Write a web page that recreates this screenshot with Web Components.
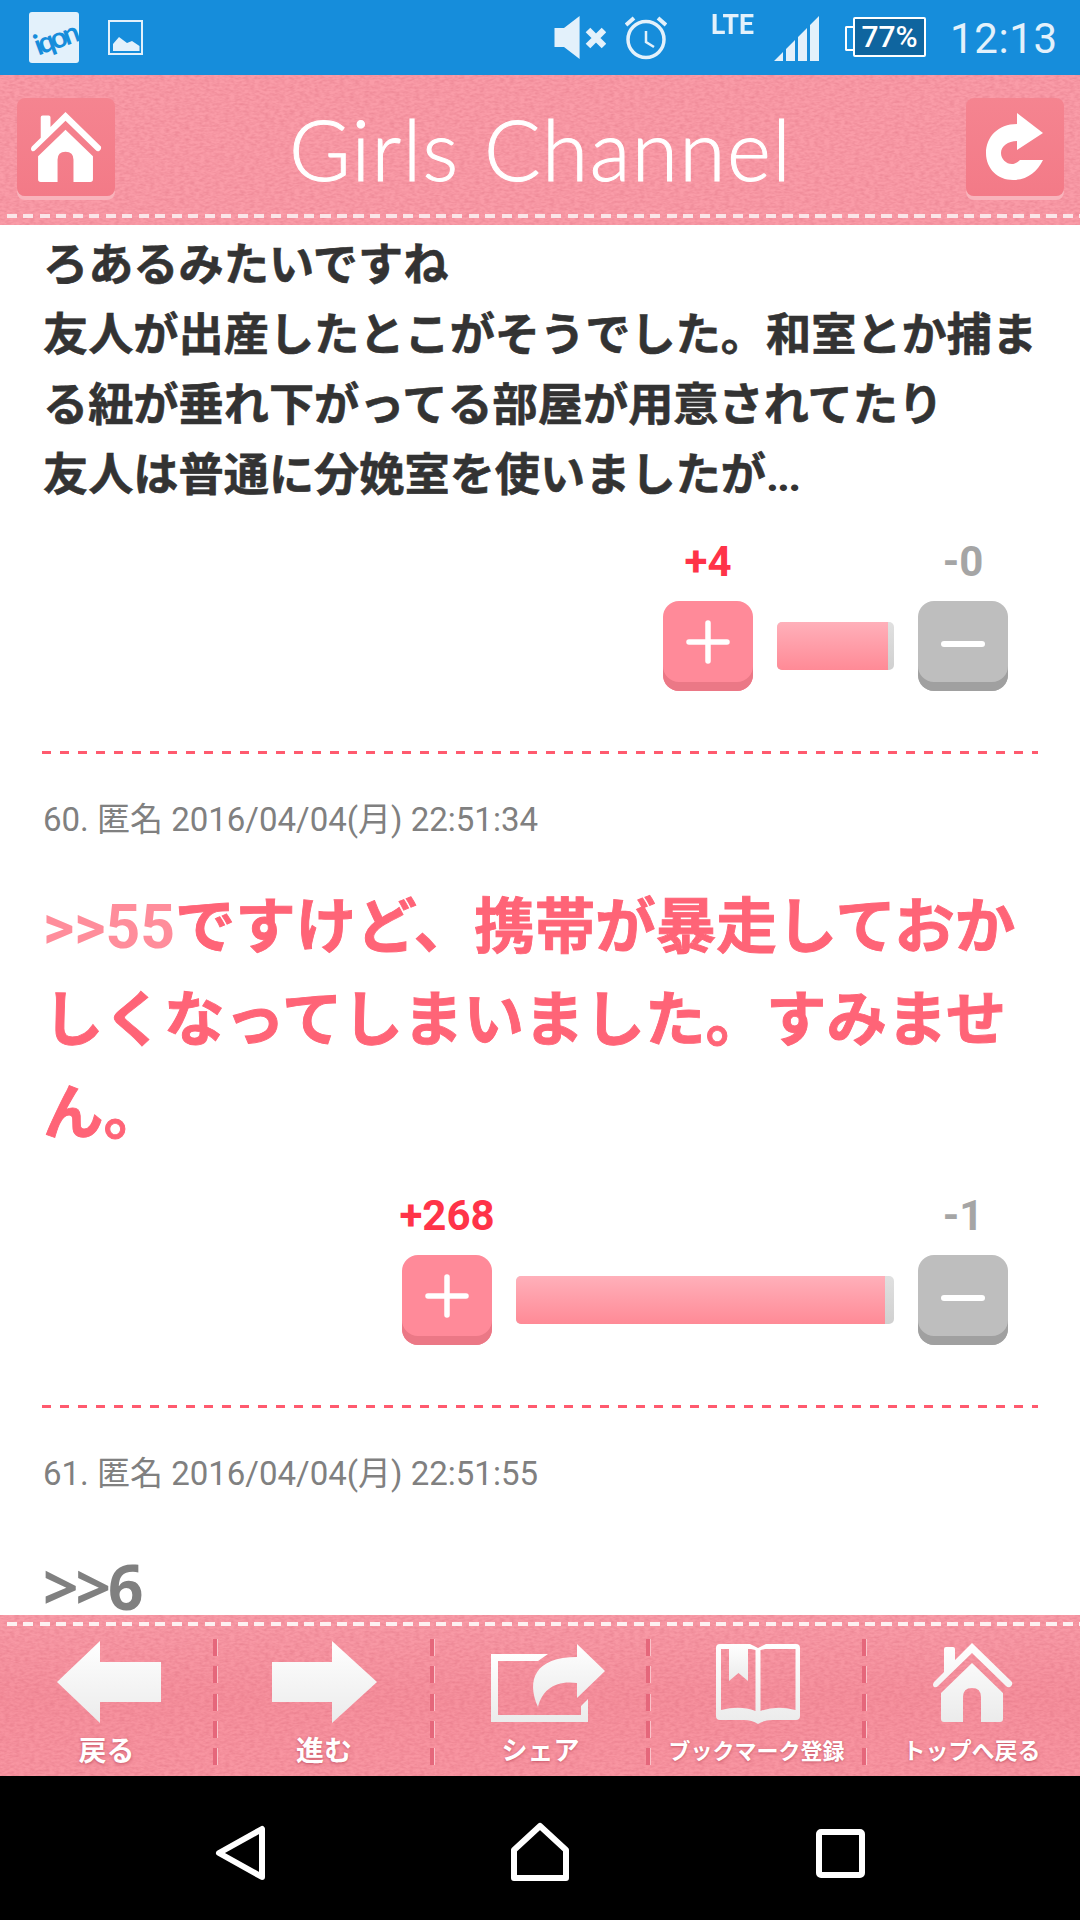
<!DOCTYPE html>
<html lang="ja">
<head>
<meta charset="utf-8">
<title>Girls Channel</title>
<style>
    html, body { margin: 0; padding: 0; background: #fff; }
    body {
        width: 1080px;
        height: 1920px;
        display: flex;
        flex-direction: column;
        overflow: hidden;
        font-family: Roboto, "Noto Sans CJK JP", sans-serif;
    }
    .anchor { color: #ff8d9b; -webkit-text-stroke: 0; }
    .dots { letter-spacing: -2px; -webkit-text-stroke: 0; }
    .big6 { font-family: "Noto Sans", "Noto Sans CJK JP", sans-serif; font-size: 62px; letter-spacing: -3px; -webkit-text-stroke: 0; }
    .defs { position: absolute; width: 0; height: 0; }
</style>
</head>
<body>
<svg class="defs" aria-hidden="true">
    <defs>
        <linearGradient id="soft-fill" x1="0" y1="0" x2="0" y2="1">
            <stop offset="0" stop-color="#ffffff"/>
            <stop offset="1" stop-color="#ebebeb"/>
        </linearGradient>
        <path id="house" d="M33 6 L39 0 L79 39 Q80 42 77 44 Q75 45 73 43 L39 10 L5 43 Q3 45 1 44 Q-1 42 1 39 L11 29 V6 Q11 4 13 4 H20 Q22 4 22 6 V17 Z M39 20 L70 50 V76 Q70 79 67 79 H48 V54 Q48 45 39 45 Q30 45 30 54 V79 H11 Q8 79 8 76 V50 Z"/>
    </defs>
</svg>

<status-bar></status-bar>

<site-header>
    <header-button slot="left">
        <svg width="98" height="98" viewBox="17 98 98 98"><use href="#house" fill="#fff" transform="translate(31 112) scale(.885)"/></svg>
    </header-button>
    Girls Channel
    <header-button slot="right">
        <svg width="98" height="98" viewBox="966 98 98 98" fill="#fff">
            <path d="M1017 124 C998 124 986 137 986 153 C986 169 998 180 1013 180 C1027 180 1037 172 1043 160 L1020 160 C1017 163 1014 164 1012 164 C1006 164 1001 159 1001 153 C1001 146 1008 141 1017 141 Z"/>
            <path d="M1017 113 L1043 133 L1017 150 Z"/>
        </svg>
    </header-button>
</site-header>

<comment-list>
    <comment-item style="--body-size:45.200px;--body-line:70px;--body-color:#333;--body-stroke:.6px;--vote-gap:27px">
        ろあるみたいですね<br>友人が出産したとこがそうでした。和室とか捕まる紐が垂れ下がってる部屋が用意されてたり<br>友人は普通に分娩室を使いましたが<span class="dots">...</span>
        <vote-bar slot="votes" plus="+4" minus="-0" bar="117" fill="111"></vote-bar>
    </comment-item>
    <comment-item style="--body-size:60.500px;--body-line:93px;--body-color:#ff6477;--body-stroke:.9px;--vote-gap:32px;--meta-gap:39px">
        <span slot="meta">60. 匿名 2016/04/04(月) 22:51:34</span>
        <span class="anchor">&gt;&gt;55</span>ですけど、携帯が暴走しておかしくなってしまいました。すみません。
        <vote-bar slot="votes" plus="+268" minus="-1" bar="378" fill="369"></vote-bar>
    </comment-item>
    <comment-item style="--body-size:60px;--body-line:60px;--body-color:#808080;--meta-gap:60px">
        <span slot="meta">61. 匿名 2016/04/04(月) 22:51:55</span>
        <span class="big6">&gt;&gt;6</span>
    </comment-item>
</comment-list>

<site-footer>
    <footer-item label="戻る" style="--label-size:28px;--w:213px">
        <svg width="213" height="84" viewBox="0 1640 213 84"><path fill="url(#soft-fill)" d="M57 1682 L100 1641 V1662 H161 V1702 H100 V1723 Z"/></svg>
    </footer-item>
    <footer-item label="進む" style="--label-size:28px;--w:212px">
        <svg width="212" height="84" viewBox="218 1640 212 84"><path fill="url(#soft-fill)" d="M377 1682 L332 1641 V1662 H272 V1702 H332 V1723 Z"/></svg>
    </footer-item>
    <footer-item label="シェア" style="--label-size:26px;--w:211px">
        <svg width="211" height="84" viewBox="435 1640 211 84">
            <path fill="url(#soft-fill)" d="M491 1654 H548 L538 1661 H498 V1715 H581 V1706 L588 1699 V1722 H491 Z"/>
            <path fill="url(#soft-fill)" d="M538 1707 C526 1680 535 1657 577 1657 V1644 L605 1671 L577 1698 V1683 C555 1680 542 1690 538 1707 Z"/>
        </svg>
    </footer-item>
    <footer-item label="ブックマーク登録" style="--label-size:22px;--w:211px">
        <svg width="211" height="84" viewBox="651 1640 211 84">
            <path fill="url(#soft-fill)" fill-rule="evenodd" d="M716 1648 Q716 1644 720 1644 H750 L758 1648 L766 1644 H796 Q800 1644 800 1648 V1716 Q800 1720 796 1720 H772 Q764 1720 758 1724 Q752 1720 744 1720 H720 Q716 1720 716 1716 Z M721 1649 V1710 Q740 1705 755.500 1711 V1650 L751 1649 Z M795.500 1649 H765 L760.500 1650 V1711 Q776 1705 795.500 1710 Z"/>
            <path fill="url(#soft-fill)" d="M729 1644 H748 V1681 L738.500 1673 L729 1681 Z"/>
        </svg>
    </footer-item>
    <footer-item label="トップへ戻る" style="--label-size:23px;--w:213px;--label-pad:4px">
        <svg width="213" height="84" viewBox="867 1640 213 84"><use href="#house" fill="url(#soft-fill)" transform="translate(933 1643)"/></svg>
    </footer-item>
</site-footer>

<nav-bar></nav-bar>

<script>
const NOISE = (id) => `
    <svg class="noise" width="100%" height="100%" aria-hidden="true">
        <filter id="${id}" x="0" y="0" width="100%" height="100%" color-interpolation-filters="sRGB">
            <feTurbulence type="fractalNoise" baseFrequency=".2 .42" numOctaves="2" seed="4"/>
            <feColorMatrix values="0 0 0 0 .78  0 0 0 0 .30  0 0 0 0 .38  .45 0 0 0 -.15"/>
        </filter>
        <rect width="100%" height="100%" filter="url(#${id})"/>
    </svg>`;

class StatusBar extends HTMLElement {
    constructor() {
        super();
        this.attachShadow({ mode: "open" });
        this.shadowRoot.innerHTML = `
            <style>
                :host {
                    display: flex;
                    flex: none;
                    height: 75px;
                    background: #168ddb;
                    color: #e3f1fb;
                    padding: 0 25px 0 29px;
                    font-family: Roboto, sans-serif;
                }
                svg { display: block; flex: none; }
                .logo {
                    width: 50px;
                    height: 51px;
                    margin-top: 12px;
                    background: #e3f1fb;
                    border-radius: 3px;
                    overflow: hidden;
                    display: flex;
                    align-items: center;
                    justify-content: center;
                }
                .logo span {
                    color: #168ddb;
                    font: 700 29px/1 Lato, sans-serif;
                    letter-spacing: -3.500px;
                    transform: rotate(-20deg);
                    white-space: nowrap;
                }
                .image { margin-left: 29px; }
                .right { margin-left: auto; display: flex; }
                .lte { margin: 10px 22px 0 44px; font-size: 28px; font-weight: 700; line-height: 30px; transform: scaleX(.95); transform-origin: left; width: 41px; }
                .battery { display: flex; margin: 17px 24px 0 26px; height: 40px; }
                .nub { width: 6px; height: 21px; margin-top: 9px; border: 2px solid #fff; border-right: 0; border-radius: 2px 0 0 2px; }
                .cell {
                    width: 69px;
                    background: #0f659f;
                    border: 2px solid #fff;
                    border-radius: 2px;
                    color: #fff;
                    font-size: 30px;
                    font-weight: 500;
                    line-height: 36px;
                    text-align: center;
                }
                .time { font-size: 42px; line-height: 78px; width: 105px; letter-spacing: .6px; white-space: nowrap; }
            </style>
            <div class="logo"><span>iqon</span></div>
            <svg class="image" width="35" height="75" viewBox="108 0 35 75" fill="#e3f1fb">
                <rect x="109" y="21" width="33" height="33" fill="none" stroke="#e3f1fb" stroke-width="2"/>
                <path d="M113 51 V44 L119 37 L127 43 L132 41 L139.500 46 V51 Z"/>
            </svg>
            <div class="right">
                <svg width="52" height="75" viewBox="554 0 52 75" fill="#e3f1fb">
                    <path d="M554.500 28 H564 L579.600 16 V59 L564 47 H554.500 Z"/>
                    <path d="M588 30 L604 46 M604 30 L588 46" stroke="#e3f1fb" stroke-width="6.500" fill="none"/>
                </svg>
                <svg style="margin-left:19px" width="42" height="75" viewBox="625 0 42 75" fill="none" stroke="#e3f1fb">
                    <circle cx="646" cy="39.500" r="18" stroke-width="3.500"/>
                    <path d="M626 25 L634 18 M666 25 L658 18" stroke-width="4"/>
                    <path d="M646 31 V42 L654 47" stroke-width="2.500"/>
                </svg>
                <div class="lte">LTE</div>
                <svg width="45" height="75" viewBox="774 0 45 75" fill="#e3f1fb">
                    <path d="M774 61 L783 52 V61 Z M786 49 L795 40 V61 H786 Z M798 37 L807 28 V61 H798 Z M810 25 L819 16 V61 H810 Z"/>
                </svg>
                <div class="battery"><div class="nub"></div><div class="cell">77%</div></div>
                <div class="time">12:13</div>
            </div>
        `;
    }
}

class HeaderButton extends HTMLElement {
    constructor() {
        super();
        this.attachShadow({ mode: "open" });
        this.shadowRoot.innerHTML = `
            <style>
                :host {
                    display: block;
                    width: 98px;
                    height: 98px;
                    border-radius: 8px;
                    background: linear-gradient(#f58490, #f37a87);
                    box-shadow: 0 4px 0 #f9b3bb;
                }
                ::slotted(svg) { display: block; }
            </style>
            <slot></slot>
        `;
    }
}

class SiteHeader extends HTMLElement {
    constructor() {
        super();
        this.attachShadow({ mode: "open" });
        this.shadowRoot.innerHTML = `
            <style>
                :host {
                    display: flex;
                    flex: none;
                    position: relative;
                    height: 150px;
                    box-sizing: border-box;
                    padding: 23px 16px 0 17px;
                    background: #fa9ca8;
                }
                .noise { position: absolute; inset: 0; }
                .side { position: relative; }
                .title {
                    position: relative;
                    flex: 1;
                    text-align: center;
                    color: #fff;
                    font: 300 84px/102px Lato, sans-serif;
                    letter-spacing: 1.400px;
                    -webkit-text-stroke: 1px #fff;
                    white-space: nowrap;
                }
                .stitch {
                    position: absolute;
                    left: 7px;
                    right: 0;
                    bottom: 7px;
                    height: 4px;
                    background: repeating-linear-gradient(90deg, #fbe5e8 0 10px, transparent 10px 16.500px);
                }
            </style>
            ${NOISE("head-noise")}
            <div class="side"><slot name="left"></slot></div>
            <div class="title"><slot></slot></div>
            <div class="side"><slot name="right"></slot></div>
            <div class="stitch"></div>
        `;
    }
}

class CommentList extends HTMLElement {
    constructor() {
        super();
        this.attachShadow({ mode: "open" });
        this.shadowRoot.innerHTML = `
            <style>
                :host {
                    display: block;
                    flex: 1;
                    min-height: 0;
                    overflow: hidden;
                    padding-top: 6px;
                    background: #fff;
                }
            </style>
            <slot></slot>
        `;
    }
}

class CommentItem extends HTMLElement {
    constructor() {
        super();
        this.attachShadow({ mode: "open" });
        this.shadowRoot.innerHTML = `
            <style>
                :host { display: block; }
                .meta {
                    padding: 0 45px 0 43px;
                    color: #808080;
                    font-size: 33px;
                    line-height: 44px;
                    margin: 44px 0 var(--meta-gap, 40px);
                }
                .meta.empty { display: none; }
                .text {
                    padding: 0 40px 0 43px;
                    color: var(--body-color);
                    font-size: var(--body-size);
                    font-weight: 700;
                    line-height: var(--body-line);
                    -webkit-text-stroke: var(--body-stroke, 0);
                }
                .votes { margin-top: var(--vote-gap, 0); }
                .rule {
                    margin: 60px 42px 0;
                    height: 3px;
                    background: repeating-linear-gradient(90deg, #ff5a6e 0 9px, transparent 9px 18px);
                }
            </style>
            <div class="meta"><slot name="meta"></slot></div>
            <div class="text"><slot></slot></div>
            <div class="votes"><slot name="votes"></slot></div>
            <div class="rule"></div>
        `;
    }

    connectedCallback() {
        if (!this.querySelector('[slot="meta"]')) {
            this.shadowRoot.querySelector(".meta").classList.add("empty");
        }
    }
}

class VoteBar extends HTMLElement {
    constructor() {
        super();
        this.attachShadow({ mode: "open" });
    }

    connectedCallback() {
        const bar = this.getAttribute("bar");
        const fill = this.getAttribute("fill");
        this.shadowRoot.innerHTML = `
            <style>
                :host {
                    display: flex;
                    justify-content: flex-end;
                    align-items: flex-end;
                    padding-right: 72px;
                    font-family: Roboto, sans-serif;
                }
                .col { width: 90px; display: flex; flex-direction: column; align-items: center; }
                .count { font-size: 42px; font-weight: 700; line-height: 48px; margin-bottom: 15px; white-space: nowrap; }
                .plus .count { color: #ff3348; }
                .minus .count { color: #a5a5a5; }
                .key { width: 90px; height: 90px; box-sizing: border-box; padding-bottom: 9px; border-radius: 16px; display: flex; align-items: center; justify-content: center; }
                .plus .key { background: #ff8a99; box-shadow: inset 0 -9px 0 #eb7886; }
                .minus .key { background: #bebebe; box-shadow: inset 0 -9px 0 #a0a0a0; }
                .meter {
                    width: ${bar}px;
                    height: 48px;
                    margin: 0 24px 21px;
                    border-radius: 5px;
                    overflow: hidden;
                    display: flex;
                    background: linear-gradient(#e0e0e0, #d0d0d0);
                }
                .meter div { width: ${fill}px; background: linear-gradient(#ffb0ba, #ff8a96); }
            </style>
            <div class="col plus">
                <div class="count">${this.getAttribute("plus")}</div>
                <div class="key">
                    <svg width="44" height="44" viewBox="0 0 44 44"><path d="M22 3 V41 M3 22 H41" stroke="#fff" stroke-width="5.500" stroke-linecap="round"/></svg>
                </div>
            </div>
            <div class="meter"><div></div></div>
            <div class="col minus">
                <div class="count">${this.getAttribute("minus")}</div>
                <div class="key">
                    <svg width="44" height="44" viewBox="0 0 44 44"><path d="M3 24 H41" stroke="#fff" stroke-width="6" stroke-linecap="round"/></svg>
                </div>
            </div>
        `;
    }
}

class FooterItem extends HTMLElement {
    constructor() {
        super();
        this.attachShadow({ mode: "open" });
    }

    connectedCallback() {
        this.shadowRoot.innerHTML = `
            <style>
                :host { display: block; flex: none; width: var(--w); text-align: center; }
                ::slotted(svg) { display: block; }
                .label {
                    color: #fff;
                    font: 700 var(--label-size, 22px)/30px "Noto Sans CJK JP", sans-serif;
                    margin-top: 10px;
                    padding-right: var(--label-pad, 0);
                    white-space: nowrap;
                    text-shadow: 0 1px 3px rgba(170, 50, 70, .6);
                }
            </style>
            <slot></slot>
            <div class="label">${this.getAttribute("label")}</div>
        `;
    }
}

class SiteFooter extends HTMLElement {
    constructor() {
        super();
        this.attachShadow({ mode: "open" });
        this.shadowRoot.innerHTML = `
            <style>
                :host {
                    display: block;
                    flex: none;
                    position: relative;
                    height: 161px;
                    box-sizing: border-box;
                    padding-top: 25px;
                    background: linear-gradient(#f99ca8, #f6909d 50%, #f996a2);
                }
                .noise { position: absolute; inset: 0; }
                .stitch {
                    position: absolute;
                    left: 7px;
                    right: 0;
                    top: 7px;
                    height: 4px;
                    background: repeating-linear-gradient(90deg, #fdf0f1 0 10px, transparent 10px 16.500px);
                }
                .row { display: flex; position: relative; }
            </style>
            ${NOISE("foot-noise")}
            <div class="stitch"></div>
            <div class="row"><slot></slot></div>
        `;
        // separadores entre botones
        [...this.querySelectorAll("footer-item")].slice(0, -1).forEach((item) => {
            item.insertAdjacentElement("afterend", document.createElement("footer-sep"));
        });
    }
}

class FooterSep extends HTMLElement {
    constructor() {
        super();
        this.attachShadow({ mode: "open" });
        this.shadowRoot.innerHTML = `
            <style>
                :host {
                    display: block;
                    flex: none;
                    width: 5px;
                    height: 126px;
                    margin-top: -1px;
                    background:
                        repeating-linear-gradient(#e5677b 0 17px, transparent 17px 27.300px) 0 0 / 4px 100% no-repeat,
                        repeating-linear-gradient(#fbc3ca 0 17px, transparent 17px 27.300px) 4px 0 / 1px 100% no-repeat;
                }
            </style>
        `;
    }
}

class NavBar extends HTMLElement {
    constructor() {
        super();
        this.attachShadow({ mode: "open" });
        this.shadowRoot.innerHTML = `
            <style>
                :host {
                    display: flex;
                    flex: none;
                    justify-content: center;
                    height: 144px;
                    background: #000;
                }
                svg { display: block; fill: none; stroke: #fff; stroke-width: 6; stroke-linejoin: round; }
            </style>
            <svg width="300" height="144" viewBox="90 1776 300 144"><path d="M262 1829 V1877 L219 1853 Z"/></svg>
            <svg width="300" height="144" viewBox="390 1776 300 144"><path d="M540 1826 L566 1850 V1878 H514 V1850 Z"/></svg>
            <svg width="300" height="144" viewBox="690 1776 300 144"><rect x="819" y="1832" width="43" height="43" rx="2"/></svg>
        `;
    }
}

customElements.define("status-bar", StatusBar);
customElements.define("header-button", HeaderButton);
customElements.define("site-header", SiteHeader);
customElements.define("comment-list", CommentList);
customElements.define("comment-item", CommentItem);
customElements.define("vote-bar", VoteBar);
customElements.define("footer-sep", FooterSep);
customElements.define("footer-item", FooterItem);
customElements.define("site-footer", SiteFooter);
customElements.define("nav-bar", NavBar);
</script>
</body>
</html>
